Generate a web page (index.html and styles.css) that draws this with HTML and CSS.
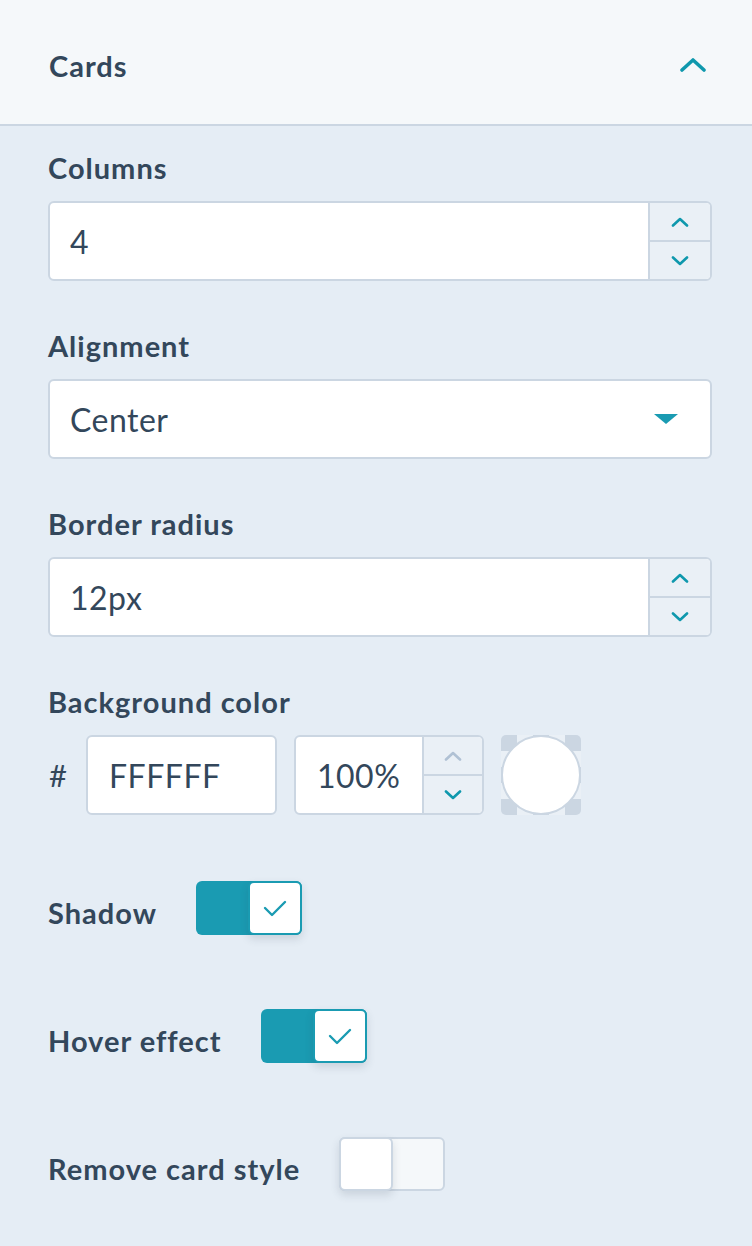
FILE: index.html
```html
<!DOCTYPE html>
<html>
<head>
<meta charset="utf-8">
<link rel="stylesheet" href="styles.css">
</head>
<body>
<div class="panel">
  <div class="header">
    <span class="title">Cards</span>
    <svg class="collapse" width="26" height="14" viewBox="0 0 26 14"><path d="M2 12 L13 2 L24 12" fill="none" stroke="#0f98ad" stroke-width="3.6" stroke-linecap="round" stroke-linejoin="round"/></svg>
  </div>
  <div class="body">
    <div class="field">
      <div class="label">Columns</div>
      <div class="input number">
        <span class="value">4</span>
        <div class="spin">
          <div class="spin-btn"><svg width="18" height="10" viewBox="0 0 18 10"><path d="M2 8.5 L9 2 L16 8.5" fill="none" stroke="#0f98ad" stroke-width="2.6" stroke-linecap="round" stroke-linejoin="round"/></svg></div>
          <div class="spin-btn"><svg width="18" height="10" viewBox="0 0 18 10"><path d="M2 1.5 L9 8 L16 1.5" fill="none" stroke="#0f98ad" stroke-width="2.6" stroke-linecap="round" stroke-linejoin="round"/></svg></div>
        </div>
      </div>
    </div>
    <div class="field">
      <div class="label">Alignment</div>
      <div class="input select">
        <span class="value">Center</span>
        <svg class="caret" width="24" height="10" viewBox="0 0 24 10"><path d="M0 0 H24 L12 10 Z" fill="#1a9bb2"/></svg>
      </div>
    </div>
    <div class="field">
      <div class="label">Border radius</div>
      <div class="input number">
        <span class="value">12px</span>
        <div class="spin">
          <div class="spin-btn"><svg width="18" height="10" viewBox="0 0 18 10"><path d="M2 8.5 L9 2 L16 8.5" fill="none" stroke="#0f98ad" stroke-width="2.6" stroke-linecap="round" stroke-linejoin="round"/></svg></div>
          <div class="spin-btn"><svg width="18" height="10" viewBox="0 0 18 10"><path d="M2 1.5 L9 8 L16 1.5" fill="none" stroke="#0f98ad" stroke-width="2.6" stroke-linecap="round" stroke-linejoin="round"/></svg></div>
        </div>
      </div>
    </div>
    <div class="field">
      <div class="label">Background color</div>
      <div class="color-row">
        <span class="hash">#</span>
        <div class="input hex"><span class="value">FFFFFF</span></div>
        <div class="input number pct">
          <span class="value">100%</span>
          <div class="spin narrow">
            <div class="spin-btn"><svg width="18" height="10" viewBox="0 0 18 10"><path d="M2 8.5 L9 2 L16 8.5" fill="none" stroke="#b0c1d4" stroke-width="2.6" stroke-linecap="round" stroke-linejoin="round"/></svg></div>
            <div class="spin-btn"><svg width="18" height="10" viewBox="0 0 18 10"><path d="M2 1.5 L9 8 L16 1.5" fill="none" stroke="#0f98ad" stroke-width="2.6" stroke-linecap="round" stroke-linejoin="round"/></svg></div>
          </div>
        </div>
        <div class="swatch"><div class="circle"></div></div>
      </div>
    </div>
    <div class="toggle-row first">
      <span class="tlabel">Shadow</span>
      <div class="toggle on"><div class="knob"><svg width="26" height="20" viewBox="0 0 26 20"><path d="M3 10 L10 17 L23 4" fill="none" stroke="#1a9bb2" stroke-width="2.4" stroke-linecap="round" stroke-linejoin="round"/></svg></div></div>
    </div>
    <div class="toggle-row">
      <span class="tlabel">Hover effect</span>
      <div class="toggle on"><div class="knob"><svg width="26" height="20" viewBox="0 0 26 20"><path d="M3 10 L10 17 L23 4" fill="none" stroke="#1a9bb2" stroke-width="2.4" stroke-linecap="round" stroke-linejoin="round"/></svg></div></div>
    </div>
    <div class="toggle-row">
      <span class="tlabel">Remove card style</span>
      <div class="toggle off"><div class="knob"></div></div>
    </div>
  </div>
</div>
</body>
</html>
```

FILE: styles.css
```css
* { box-sizing: border-box; }
html, body { margin: 0; padding: 0; }
body {
  width: 752px;
  height: 1246px;
  background: #e5edf5;
  font-family: "Lato", "Open Sans", sans-serif;
  color: #33475b;
  overflow: hidden;
}
.panel { width: 752px; }
.header {
  height: 126px;
  background: #f5f8fa;
  border-bottom: 2px solid #cbd6e2;
  display: flex;
  align-items: center;
  justify-content: space-between;
  padding: 6px 46px 0 49px;
}
.title { font-size: 29px; font-weight: 700; letter-spacing: 1px; }
.collapse { display: block; }
.body { padding: 26px 40px 0 48px; }
.field { margin-bottom: 49px; }
.label {
  font-size: 29px;
  font-weight: 700;
  line-height: 32px;
  margin-bottom: 17px;
  letter-spacing: 1px;
}
.input {
  height: 80px;
  background: #fff;
  border: 2px solid #cbd6e2;
  border-radius: 6px;
  display: flex;
  align-items: center;
  font-size: 32px;
  letter-spacing: 0.5px;
  overflow: hidden;
}
.input .value { padding-left: 20px; flex: 1; }
.spin {
  width: 62px;
  align-self: stretch;
  border-left: 2px solid #cbd6e2;
  background: #eaf0f6;
  display: flex;
  flex-direction: column;
}
.spin.narrow { width: 60px; }
.spin-btn {
  flex: 1;
  display: flex;
  align-items: center;
  justify-content: center;
}
.spin-btn + .spin-btn { border-top: 2px solid #cbd6e2; }
.select .caret { margin-right: 32px; }
.color-row {
  display: flex;
  align-items: center;
  gap: 17px;
}
.hash { font-size: 31px; width: 21px; padding-left: 1px; }
.hex { width: 191px; }
.hex .value { padding-left: 21px; }
.pct { width: 190px; }
.pct .value { padding-left: 21px; }
.swatch {
  width: 80px;
  height: 80px;
  border-radius: 5px;
  background: repeating-conic-gradient(#eaf0f6 0 25%, #cbd6e2 0 50%) 0 0 / 32px 32px;
  display: flex;
  align-items: center;
  justify-content: center;
  overflow: hidden;
}
.circle {
  flex: none;
  width: 80px;
  height: 80px;
  border-radius: 50%;
  background: #fff;
  border: 2px solid #cbd6e2;
}
.toggle-row {
  display: flex;
  align-items: center;
  gap: 39px;
  height: 54px;
  margin-bottom: 74px;
}
.toggle-row.first { margin-top: 66px; }
.tlabel { font-size: 29px; font-weight: 700; letter-spacing: 1px; position: relative; top: 4px; }
.toggle {
  width: 106px;
  height: 54px;
  border-radius: 6px;
  display: flex;
  position: relative;
}
.toggle.on {
  background: #1a9bb2;
  justify-content: flex-end;
}
.toggle.off {
  background: #f5f8fa;
  border: 2px solid #cbd6e2;
  justify-content: flex-start;
}
.knob {
  width: 54px;
  height: 54px;
  background: #fff;
  border-radius: 6px;
  display: flex;
  align-items: center;
  justify-content: center;
  box-shadow: 0 4px 8px rgba(45, 62, 80, 0.15);
}
.toggle.on .knob { border: 2px solid #1a9bb2; }
.toggle.off .knob {
  border: 2px solid #cbd6e2;
  margin: -2px 0 0 -2px;
}
```
